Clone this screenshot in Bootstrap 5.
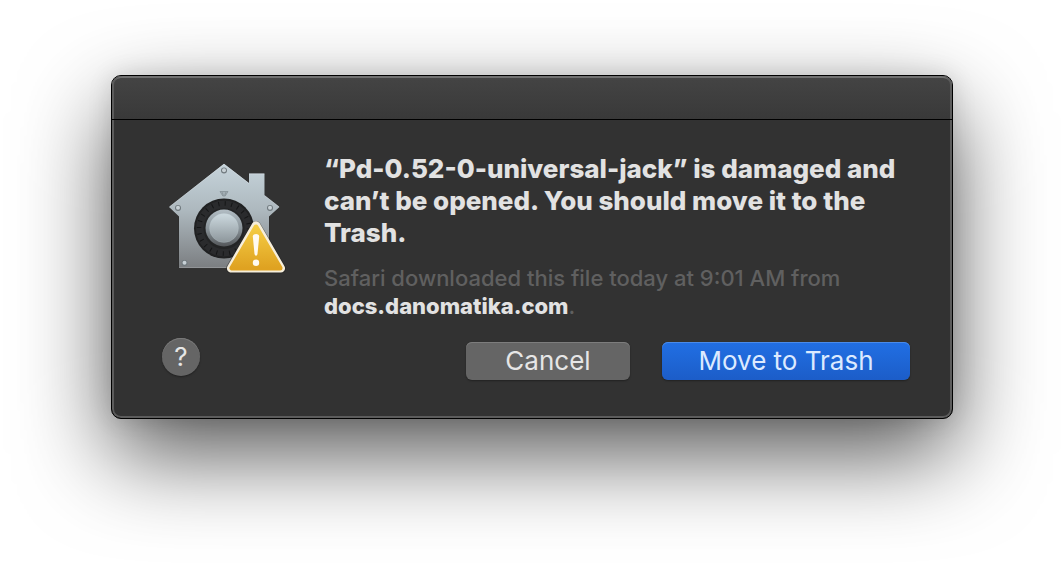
<!DOCTYPE html>
<html lang="en">
<head>
<meta charset="utf-8">
<meta name="viewport" content="width=device-width, initial-scale=1">
<title>Damaged application</title>
<link href="https://cdn.jsdelivr.net/npm/bootstrap@5.3.0/dist/css/bootstrap.min.css" rel="stylesheet">
<style>
  body { font-family: Inter, "Liberation Sans", sans-serif; background: #fff; }
  .stage { padding: 75px 24px 24px; }
  .alert-window {
    width: 100%; max-width: 842px;
    background: #323232; color: #e2e2e2;
    border: 1px solid #000; border-radius: 10px;
    box-shadow: inset 0 0 0 2px #5c5c5c, 0 36px 90px rgba(0,0,0,.66), 0 0 24px rgba(0,0,0,.12);
  }
  .title-strip {
    height: 44px; border-bottom: 1px solid #000; border-radius: 9px 9px 0 0;
    background: linear-gradient(#444, #393939);
    box-shadow: inset 2px 0 #5c5c5c, inset -2px 0 #5c5c5c, inset 0 2px #707070;
  }
  .window-body { padding: 33px 42px 38px 48px; }
  .message { gap: 36px; }
  .app-icon { width: 128px; height: 128px; margin-top: 2px; }
  .headline { font-size: 26px; line-height: 32px; font-weight: 800; margin-bottom: 15px; }
  .detail { font-size: 22px; line-height: 28px; font-weight: 500; color: #606060; }
  .detail a { color: #e2e2e2; font-weight: 800; }
  .actions { min-height: 42px; margin-top: 18px; }
  .choices { gap: 32px; }
  .push {
    height: 38px; padding: 0; border: 0; border-radius: 6px;
    font-size: 26px; line-height: 38px; color: #e6e6e6;
  }
  .push-cancel { width: 164px; background: #656565; box-shadow: inset 0 1px #7d7d7d, 0 1px 2px rgba(0,0,0,.35); }
  .push-trash { width: 248px; color: #dceaff; background: linear-gradient(#216fe4, #1c5dc8); box-shadow: inset 0 1px #4a8bea, 0 1px 2px rgba(0,0,0,.35); }
  .push-cancel:hover { background: #707070; color: #fff; }
  .push-trash:hover { background: #2673ea; color: #fff; }
  .help { width: 38px; margin-left: 2px; border-radius: 50%; background: #656565; box-shadow: inset 0 1px #7a7a7a, 0 1px 2px rgba(0,0,0,.35); }
</style>
</head>
<body>
<main class="stage min-vh-100 d-flex justify-content-center align-items-start overflow-hidden">
  <section class="alert-window" role="alertdialog" aria-labelledby="headline" aria-describedby="detail">
    <div class="title-strip"></div>
    <div class="window-body">
      <div class="message d-flex align-items-start">
        <svg class="app-icon flex-shrink-0" viewBox="160 155 128 128" aria-hidden="true">
          <defs>
            <linearGradient id="steel" x1="0" y1="0" x2="0" y2="1"><stop offset="0" stop-color="#c6d4db"/><stop offset=".45" stop-color="#adb8be"/><stop offset="1" stop-color="#7b7e81"/></linearGradient>
            <linearGradient id="rim" x1="0" y1="0" x2="0" y2="1"><stop offset="0" stop-color="#b2bdc4"/><stop offset=".5" stop-color="#8b959b"/><stop offset="1" stop-color="#535659"/></linearGradient>
            <linearGradient id="knob" x1="0" y1="0" x2="0" y2="1"><stop offset="0" stop-color="#cddae0"/><stop offset="1" stop-color="#8d969b"/></linearGradient>
            <linearGradient id="amber" x1="0" y1="0" x2="0" y2="1"><stop offset="0" stop-color="#f4cc43"/><stop offset="1" stop-color="#dfa221"/></linearGradient>
            <g id="screw"><circle r="3" fill="#70797e"/><circle cy="-.3" r="2" fill="#c8d1d6"/></g>
          </defs>
          <path d="M224 163.7 249 183v-9.500h15.500v21.700L279.500 207l-10.500 9.500V268H179v-51.500L169 207Z" fill="url(#steel)" stroke="#262626" stroke-opacity=".5" stroke-width="1" paint-order="stroke"/>
          <path d="M169.500 206.800 224 164.200l25 19.300M249 174h15.300M264.500 195.500 279 206.800" fill="none" stroke="#dce4e8" stroke-opacity=".55" stroke-width=".8"/>
          <path d="M179.300 267.600h89" stroke="#aeb2b4" stroke-opacity=".6" stroke-width=".8"/>
          <use href="#screw" x="224" y="170.500"/><use href="#screw" x="178" y="208"/><use href="#screw" x="270" y="208"/><use href="#screw" x="184.500" y="263"/>
          <path d="M220 191.500h8l-2.800 4.500h-2.400ZM222 192l1.300 3.500M226 192l-1.300 3.500" fill="#a3afb5" stroke="#7f8b91" stroke-width=".7"/>
          <circle cx="224" cy="228.500" r="30" fill="#202122"/>
          <circle cx="224" cy="228.500" r="28" fill="#2a2b2d"/>
          <circle cx="224" cy="228.500" r="25" fill="none" stroke="#151617" stroke-width="4.500" stroke-dasharray="1 5.545"/>
          <circle cx="224" cy="228.500" r="20.500" fill="#232425"/>
          <circle cx="224" cy="228" r="18.500" fill="url(#rim)"/>
          <circle cx="224" cy="228" r="14.500" fill="url(#knob)" stroke="#c2cdd2" stroke-opacity=".35" stroke-width=".6"/>
          <path d="M256 226 231 268.500h50Z" fill="#222" stroke="#222" stroke-opacity=".5" fill-opacity=".5" stroke-width="10" stroke-linejoin="round"/>
          <path d="M256 225.500 231.200 268.300h49.600Z" fill="#f6eedb" stroke="#f6eedb" stroke-width="8.500" stroke-linejoin="round"/>
          <path d="M256 227 232 268h48Z" fill="url(#amber)" stroke="url(#amber)" stroke-width="5" stroke-linejoin="round"/>
          <path d="M252.800 236.500Q252.800 234 256 234t3.200 2.500L257.500 254Q257.200 255.800 256 255.800T254.500 254Z" fill="#fffaf0"/>
          <circle cx="256" cy="262.800" r="3.200" fill="#fffaf0"/>
        </svg>
        <div>
          <h1 class="headline" id="headline">“Pd-0.52-0-universal-jack” is damaged and can’t be opened. You should move it to the Trash.</h1>
          <p class="detail mb-0" id="detail">Safari downloaded this file today at 9:01 AM from <a class="text-decoration-none" href="#">docs.danomatika.com</a>.</p>
        </div>
      </div>
      <div class="actions d-flex justify-content-between">
        <button type="button" class="btn push help align-self-start" aria-label="Help">?</button>
        <div class="choices d-flex align-items-end">
          <button type="button" class="btn push push-cancel">Cancel</button>
          <button type="button" class="btn push push-trash">Move to Trash</button>
        </div>
      </div>
    </div>
  </section>
</main>
<script src="https://cdn.jsdelivr.net/npm/bootstrap@5.3.0/dist/js/bootstrap.bundle.min.js"></script>
</body>
</html>
